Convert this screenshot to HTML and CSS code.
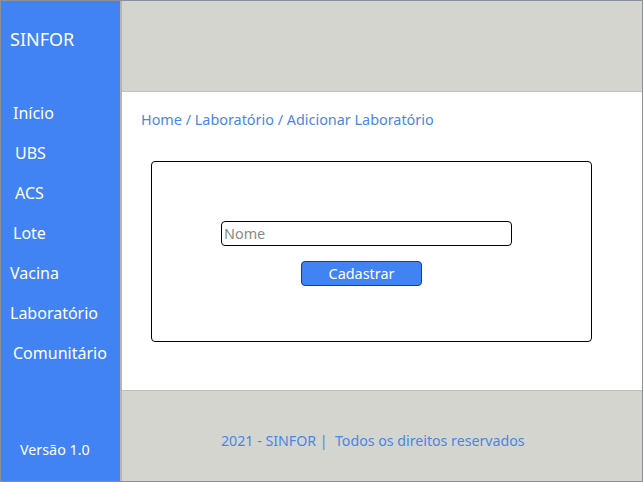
FILE: index.html
```html
<!DOCTYPE html>
<html lang="pt">
<head>
<meta charset="utf-8">
<title>SINFOR</title>
<link rel="stylesheet" href="styles.css">
</head>
<body>
<div class="app">
  <aside class="sidebar">
    <div class="brand">SINFOR</div>
    <nav class="menu">
      <a class="item i3">Início</a>
      <a class="item i5">UBS</a>
      <a class="item i5">ACS</a>
      <a class="item i3">Lote</a>
      <a class="item">Vacina</a>
      <a class="item">Laboratório</a>
      <a class="item i3">Comunitário</a>
    </nav>
    <div class="version">Versão 1.0</div>
  </aside>
  <main class="main">
    <header class="topbar"></header>
    <section class="content">
      <div class="breadcrumb">Home / Laboratório / Adicionar Laboratório</div>
      <form class="card">
        <input class="field" type="text" placeholder="Nome">
        <button class="btn" type="button">Cadastrar</button>
      </form>
    </section>
    <footer class="footer">2021 - SINFOR |&nbsp; Todos os direitos reservados</footer>
  </main>
</div>
</body>
</html>
```
FILE: styles.css
```css
* { box-sizing: border-box; }
html, body { margin: 0; padding: 0; }
body {
  font-family: "Noto Sans", "Open Sans", sans-serif;
  background: #d3d5ce;
}
.app {
  width: 643px;
  height: 482px;
  border: 1px solid #8a8f99;
  display: flex;
}
.sidebar {
  width: 121px;
  background: #4183f3;
  border-right: 2px solid #b4b6b0;
  color: #fff;
  display: flex;
  flex-direction: column;
}
.brand {
  font-size: 18px;
  padding: 27px 0 0 9px;
  height: 101px;
  line-height: 22px;
}
.menu {
  display: flex;
  flex-direction: column;
  gap: 18px;
}
.item {
  font-size: 16px;
  line-height: 22px;
  padding-left: 9px;
  color: #fff;
}
.item.i3 { padding-left: 12px; }
.item.i5 { padding-left: 14px; }
.version {
  margin-top: auto;
  font-size: 14.3px;
  padding: 0 0 22px 19px;
}
.main {
  flex: 1;
  display: flex;
  flex-direction: column;
}
.topbar {
  height: 90px;
  background: #d3d5ce;
}
.content {
  height: 300px;
  background: #fff;
  border-top: 1px solid #c0c2bc;
  border-bottom: 1px solid #c0c2bc;
  padding: 18px 0 0 19px;
}
.breadcrumb {
  font-size: 14.4px;
  color: #4a86e8;
  line-height: 20px;
}
.card {
  margin: 31px 0 0 10px;
  width: 441px;
  height: 181px;
  border: 1px solid #000;
  border-radius: 4px;
  display: flex;
  flex-direction: column;
  align-items: flex-start;
  padding-top: 59px;
  gap: 15px;
}
.field {
  width: 291px;
  height: 25px;
  border: 1px solid #000;
  border-radius: 4px;
  font: 14.4px "Noto Sans", "Open Sans", sans-serif;
  padding: 0 2px;
  margin-left: 69px;
}
.field::placeholder { color: #8a8a8a; }
.btn {
  width: 121px;
  height: 25px;
  background: #4183f3;
  color: #fff;
  border: 1px solid #1f3f75;
  border-radius: 4px;
  font: 14.4px "Noto Sans", "Open Sans", sans-serif;
  padding: 0;
  margin-left: 149px;
}
.footer {
  flex: 1;
  font-size: 14.2px;
  color: #4a86e8;
  padding: 40px 0 0 99px;
}
```
